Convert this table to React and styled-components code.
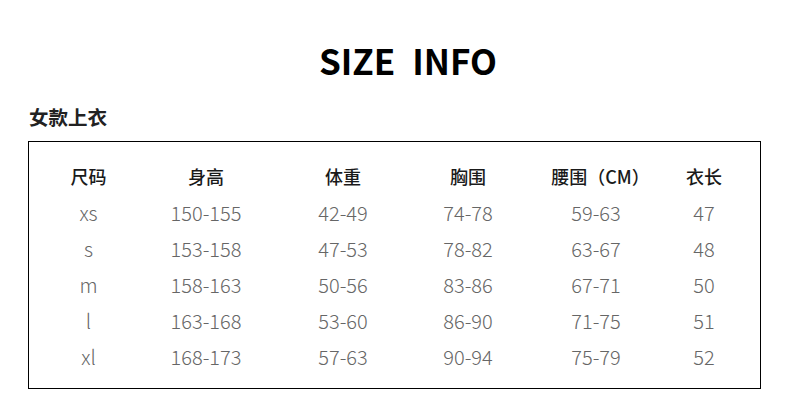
import React from 'react';
import styled, { createGlobalStyle } from 'styled-components';

const Global = createGlobalStyle`
  html, body {
    margin: 0;
    padding: 0;
    background: #fff;
  }
  body {
    font-family: "Noto Sans CJK SC", "Noto Sans", sans-serif;
  }
`;

const Page = styled.div`
  width: 790px;
  height: 407px;
  box-sizing: border-box;
  padding: 32px 29px 0 28px;
  background: #fff;
`;

const Title = styled.h1`
  margin: 0;
  text-align: center;
  font-size: 35px;
  font-weight: 700;
  line-height: 56px;
  color: #000;
  word-spacing: 9px;
  padding-left: 27px;
`;

const Subtitle = styled.h2`
  margin: 16px 0 0 1px;
  font-size: 19.5px;
  font-weight: 700;
  line-height: 26px;
  color: #222;
`;

const Table = styled.div`
  margin-top: 11px;
  width: 733px;
  height: 248px;
  box-sizing: border-box;
  border: 1.5px solid #000;
  padding-top: 16px;
`;

const Row = styled.div`
  display: grid;
  grid-template-columns: 119px 116px 158px 92px 164px 52px;
  height: 36px;
  align-items: center;
  color: ${props => (props.head ? '#1a1a1a' : '#666')};
  font-size: ${props => (props.head ? '18px' : '20px')};
  font-weight: ${props => (props.head ? 500 : 300)};
`;

const Cell = styled.div`
  text-align: center;
  white-space: nowrap;
  padding-left: ${props => props.shift || 0}px;
`;

const head = ['尺码', '身高', '体重', '胸围', '腰围（CM）', '衣长'];

const rows = [
  ['xs', '150-155', '42-49', '74-78', '59-63', '47'],
  ['s', '153-158', '47-53', '78-82', '63-67', '48'],
  ['m', '158-163', '50-56', '83-86', '67-71', '50'],
  ['l', '163-168', '53-60', '86-90', '71-75', '51'],
  ['xl', '168-173', '57-63', '90-94', '75-79', '52'],
];

const App = () => {
  return (
    <Page>
      <Global />
      <Title>SIZE INFO</Title>
      <Subtitle>女款上衣</Subtitle>
      <Table>
        <Row head>
          {head.map((h, i) => (
            <Cell key={h} shift={i === 4 ? 9 : 0}>
              {h}
            </Cell>
          ))}
        </Row>
        {rows.map(r => (
          <Row key={r[0]}>
            {r.map((v, i) => (
              <Cell key={i}>{v}</Cell>
            ))}
          </Row>
        ))}
      </Table>
    </Page>
  );
};

export default App;
